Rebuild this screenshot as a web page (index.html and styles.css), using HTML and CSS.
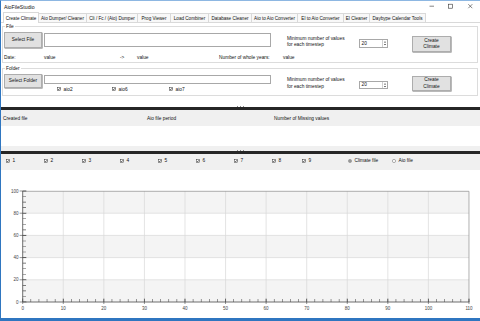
FILE: index.html
```html
<!DOCTYPE html>
<html>
<head>
<meta charset="utf-8">
<title>AioFileStudio</title>
<link rel="stylesheet" href="styles.css">
</head>
<body>
<svg class="defs" width="0" height="0">
  <defs>
    <symbol id="chk" viewBox="0 0 4 4">
      <rect x="0.3" y="0.3" width="3.4" height="3.4" fill="#fff" stroke="#333" stroke-width="0.5"/>
      <path d="M0.9 2 L1.7 2.8 L3.1 1.1" fill="none" stroke="#111" stroke-width="0.6"/>
    </symbol>
    <symbol id="rad-on" viewBox="0 0 4 4">
      <circle cx="2" cy="2" r="1.6" fill="#fff" stroke="#444" stroke-width="0.45"/>
      <circle cx="2" cy="2" r="0.8" fill="#222"/>
    </symbol>
    <symbol id="rad-off" viewBox="0 0 4 4">
      <circle cx="2" cy="2" r="1.6" fill="#fff" stroke="#555" stroke-width="0.45"/>
    </symbol>
    <symbol id="spin" viewBox="0 0 5 7">
      <path d="M1 2.6 L2.5 1 L4 2.6 Z M1 4.4 L2.5 6 L4 4.4 Z" fill="#444"/>
    </symbol>
  </defs>
</svg>
<div class="window">
  <div class="titlebar">
    <span class="title">AioFileStudio</span>
    <svg class="controls" viewBox="420 1 60 11" width="60" height="11">
      <path d="M429.5 6.2H434" stroke="#333" stroke-width="0.6"/>
      <rect x="448.3" y="4.2" width="4" height="4" fill="none" stroke="#333" stroke-width="0.6"/>
      <path d="M468.3 4.2L472.3 8.2M472.3 4.2L468.3 8.2" stroke="#333" stroke-width="0.6"/>
    </svg>
  </div>
  <div class="tabs">
    <div class="tab active">Create Climate</div>
    <div class="tab">Aio Dumper/ Cleaner</div>
    <div class="tab">Cli / Fc / (Aio) Dumper</div>
    <div class="tab">Prog Viewer</div>
    <div class="tab">Load Combiner</div>
    <div class="tab">Database Cleaner</div>
    <div class="tab">Aio to Aio Converter</div>
    <div class="tab">El to Aio Converter</div>
    <div class="tab">El Cleaner</div>
    <div class="tab">Daybype Calendar Tools</div>
  </div>
  <div class="page">
    <fieldset class="group file">
      <legend>File</legend>
      <div class="row">
        <div class="btn sel">Select File</div>
        <div class="path"><div class="input"></div></div>
        <div class="minlbl">Minimum number of values<br>for each timestep</div>
        <div class="num"><span>20</span><svg class="spin"><use href="#spin"/></svg></div>
        <div class="btn create">Create<br>Climate</div>
      </div>
      <div class="daterow">
        <span>Date:</span><span>value</span><span>-&gt;</span><span>value</span><span>Number of whole years:</span><span>value</span>
      </div>
    </fieldset>
    <fieldset class="group folder">
      <legend>Folder</legend>
      <div class="row">
        <div class="btn sel">Select Folder</div>
        <div class="path">
          <div class="input"></div>
          <div class="checks">
            <span class="chk"><svg class="box"><use href="#chk"/></svg>aio2</span>
            <span class="chk"><svg class="box"><use href="#chk"/></svg>aio6</span>
            <span class="chk"><svg class="box"><use href="#chk"/></svg>aio7</span>
          </div>
        </div>
        <div class="minlbl">Minimum number of values<br>for each timestep</div>
        <div class="num"><span>20</span><svg class="spin"><use href="#spin"/></svg></div>
        <div class="btn create">Create<br>Climate</div>
      </div>
    </fieldset>
    <div class="splitter s1"><div class="grip"><i></i><i></i><i></i></div><div class="bar"></div></div>
    <div class="listhead"><span>Created file</span><span>Aio file period</span><span>Number of Missing values</span></div>
    <div class="listbody"></div>
    <div class="splitter s2"><div class="grip"><i></i><i></i><i></i></div><div class="bar"></div></div>
    <div class="checkrow">
      <span class="chk"><svg class="box"><use href="#chk"/></svg>1</span>
      <span class="chk"><svg class="box"><use href="#chk"/></svg>2</span>
      <span class="chk"><svg class="box"><use href="#chk"/></svg>3</span>
      <span class="chk"><svg class="box"><use href="#chk"/></svg>4</span>
      <span class="chk"><svg class="box"><use href="#chk"/></svg>5</span>
      <span class="chk"><svg class="box"><use href="#chk"/></svg>6</span>
      <span class="chk"><svg class="box"><use href="#chk"/></svg>7</span>
      <span class="chk"><svg class="box"><use href="#chk"/></svg>8</span>
      <span class="chk"><svg class="box"><use href="#chk"/></svg>9</span>
      <span class="chk"><svg class="box"><use href="#rad-on"/></svg>Climate file</span>
      <span class="chk"><svg class="box"><use href="#rad-off"/></svg>Aio file</span>
    </div>
    <div class="chart">
      <svg viewBox="1 170 479 148" width="479" height="148">
        <rect x="22.7" y="191" width="446.3" height="22.2" fill="#f4f4f4"/>
        <rect x="22.7" y="235.4" width="446.3" height="22.2" fill="#f4f4f4"/>
        <rect x="22.7" y="279.8" width="446.3" height="22.2" fill="#f4f4f4"/>
        <g stroke="#d9d9d9" stroke-width="0.7" fill="none">
          <path d="M63.27 191V302M103.84 191V302M144.41 191V302M184.98 191V302M225.55 191V302M266.12 191V302M306.69 191V302M347.26 191V302M387.83 191V302M428.4 191V302"/>
          <path d="M22.7 213.2H469M22.7 235.4H469M22.7 257.6H469M22.7 279.8H469"/>
        </g>
        <path d="M22.7 191.3H468.97V302" fill="none" stroke="#9a9a9a" stroke-width="0.8"/>
        <line x1="22.7" y1="300.5" x2="469.5" y2="300.5" stroke="#555" stroke-width="3" stroke-dasharray="0.6 7.514" stroke-dashoffset="0.3"/>
        <line x1="24.35" y1="302" x2="24.35" y2="190" stroke="#555" stroke-width="3.3" stroke-dasharray="0.6 4.95" stroke-dashoffset="0.3"/>
        <path d="M22.7 191V302H469.3" fill="none" stroke="#4a4a4a" stroke-width="0.8"/>
        <path d="M22.7 298.5V304M63.27 298.5V304M103.84 298.5V304M144.41 298.5V304M184.98 298.5V304M225.55 298.5V304M266.12 298.5V304M306.69 298.5V304M347.26 298.5V304M387.83 298.5V304M428.4 298.5V304M468.97 298.5V304" stroke="#4a4a4a" stroke-width="0.6"/>
        <path d="M19.6 191H26.5M19.6 213.2H26.5M19.6 235.4H26.5M19.6 257.6H26.5M19.6 279.8H26.5M19.6 302H26.5" stroke="#4a4a4a" stroke-width="0.6"/>
        <g class="ylab" text-anchor="end">
          <text x="18.4" y="192.6">100</text>
          <text x="18.4" y="214.8">80</text>
          <text x="18.4" y="237">60</text>
          <text x="18.4" y="259.2">40</text>
          <text x="18.4" y="281.4">20</text>
          <text x="18.4" y="303.6">0</text>
        </g>
        <g class="xlab" text-anchor="middle">
          <text x="22.7" y="309.8">0</text>
          <text x="63.27" y="309.8">10</text>
          <text x="103.84" y="309.8">20</text>
          <text x="144.41" y="309.8">30</text>
          <text x="184.98" y="309.8">40</text>
          <text x="225.55" y="309.8">50</text>
          <text x="266.12" y="309.8">60</text>
          <text x="306.69" y="309.8">70</text>
          <text x="347.26" y="309.8">80</text>
          <text x="387.83" y="309.8">90</text>
          <text x="428.4" y="309.8">100</text>
          <text x="468.97" y="309.8">110</text>
        </g>
      </svg>
    </div>
  </div>
</div>
</body>
</html>
```
FILE: styles.css
```css
* { box-sizing: border-box; }
html, body { margin: 0; padding: 0; }
body {
  width: 480px;
  height: 321px;
  overflow: hidden;
  background: #fff;
  font-family: "Liberation Sans", Arial, sans-serif;
  font-size: 4.8px;
  color: #111;
}
.defs { position: absolute; width: 0; height: 0; overflow: hidden; }

.window {
  height: 321px;
  display: flex;
  flex-direction: column;
  border-top: 1px solid #8db7e2;
  border-left: 1px solid #2f76c0;
  border-bottom: 3px solid #2f76c0;
}

/* title bar */
.titlebar { height: 11px; flex: none; display: flex; align-items: center; }
.title { margin-left: 3px; font-size: 5.2px; line-height: 6px; }
.controls { margin-left: auto; display: block; }

/* tab strip */
.tabs {
  height: 11px;
  flex: none;
  display: flex;
  align-items: flex-end;
  padding-left: 2px;
  border-bottom: 1px solid #d9d9d9;
}
.tab {
  height: 9px;
  border: 1px solid #d9d9d9;
  border-left: none;
  border-bottom: none;
  background: #f8f8f8;
  display: flex;
  align-items: center;
  justify-content: center;
  white-space: nowrap;
  line-height: 5px;
  font-size: 4.6px;
}
.tab.active { height: 11px; margin-bottom: -1px; background: #fff; border-left: 1px solid #d9d9d9; }
.tab:nth-child(1) { width: 36px; }
.tab:nth-child(2) { width: 48px; }
.tab:nth-child(3) { width: 51px; }
.tab:nth-child(4) { width: 33px; }
.tab:nth-child(5) { width: 38px; }
.tab:nth-child(6) { width: 43px; }
.tab:nth-child(7) { width: 46px; }
.tab:nth-child(8) { width: 46px; }
.tab:nth-child(9) { width: 26px; }
.tab:nth-child(10) { width: 56px; }

/* page */
.page { flex: 1; min-height: 0; display: flex; flex-direction: column; }

.group {
  margin: 1px 2px 0 1px;
  padding: 0 0 2.5px 0;
  border: 1px solid #dcdcdc;
  min-width: 0;
}
.group legend {
  padding: 0 1px;
  margin-left: 2px;
  height: 5px;
  line-height: 5px;
  font-size: 4.8px;
}
.row { display: flex; align-items: flex-start; margin-top: 3px; }

.btn {
  background: #e1e1e1;
  border: 1px solid #adadad;
  box-shadow: 0.6px 0.6px 0 #8c8c8c;
  display: flex;
  align-items: center;
  justify-content: center;
  text-align: center;
  line-height: 6.3px;
  white-space: nowrap;
}
.sel { margin-left: 1px; width: 38px; height: 16px; }
.path { margin-left: 2px; width: 227px; }
.input { height: 14px; margin-top: 1px; border: 1px solid #a8a8a8; background: #fff; }
.minlbl { margin-left: 16px; width: 72px; margin-top: 4.15px; line-height: 6.3px; white-space: nowrap; }
.num {
  width: 29px;
  height: 8.5px;
  margin-top: 7px;
  border: 1px solid #a8a8a8;
  background: #fff;
  display: flex;
  align-items: center;
  padding-left: 1.5px;
  line-height: 5px;
}
.spin { margin-left: auto; margin-right: 0.5px; width: 5px; height: 6.5px; border-left: 0.5px solid #d0d0d0; }
.create { margin-left: 24px; width: 39px; height: 16px; margin-top: 4px; }

.daterow {
  display: grid;
  grid-template-columns: 40px 76px 17px 82px 64px auto;
  padding-left: 1px;
  margin-top: 2.5px;
  height: 5px;
  line-height: 5px;
  white-space: nowrap;
}

.group.folder { margin-top: 2.5px; padding-bottom: 3.5px; }
.folder .row { margin-top: 3.5px; }
.folder .sel { height: 14px; }
.folder .input { height: 9px; }
.folder .minlbl { margin-top: 2.85px; line-height: 6.7px; }
.folder .num { margin-top: 6.5px; }
.folder .create { height: 15px; margin-top: 2px; }

.checks {
  display: grid;
  grid-template-columns: 55px 57px auto;
  padding-left: 13px;
  margin-top: 2.5px;
  height: 5px;
}
.chk { display: flex; align-items: center; gap: 2.5px; height: 5px; line-height: 5px; white-space: nowrap; }
.box { width: 4px; height: 4px; flex: none; }

/* splitters */
.splitter { flex: none; display: flex; flex-direction: column; }
.s1 { margin-top: 9px; }
.grip { display: flex; justify-content: center; align-items: flex-end; gap: 2px; height: 2px; }
.grip i { display: block; width: 1px; height: 1px; background: #8a8a8a; }
.s2 .grip { height: 5px; background: #f0f0f0; padding-bottom: 0.5px; }
.bar { height: 3px; background: #262626; }

/* list */
.listhead {
  flex: none;
  height: 16px;
  background: #f0f0f0;
  display: grid;
  grid-template-columns: 144px 127px auto;
  align-items: center;
  padding-left: 2px;
  white-space: nowrap;
}
.listbody { flex: none; height: 20px; background: #fff; }

.checkrow {
  flex: none;
  height: 16px;
  background: #f0f0f0;
  display: grid;
  grid-template-columns: repeat(7, 38px) 30px 46px 44px auto;
  align-items: start;
  padding-left: 5px;
  padding-top: 4px;
}

.chart { flex: 1; min-height: 0; background: #fff; }
.chart svg { display: block; }
.ylab text, .xlab text { font-family: "Liberation Sans", Arial, sans-serif; font-size: 4.5px; fill: #444; }
```
